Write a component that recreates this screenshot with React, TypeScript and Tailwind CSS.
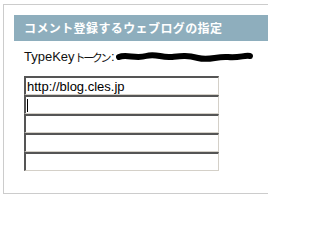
export default function App() {
  const urls = ["http://blog.cles.jp", "", "", "", ""];
  return (
    <div className="w-[268px] h-[201px] overflow-hidden bg-white pt-[4px] pl-[3px]">
      <div className="w-[290px] h-[190px] border-l border-t border-b border-[#cccccc] pt-[10px] pl-[10px]">
        <div
          className="h-[26px] bg-[#8eaebd] pl-[10px] flex items-center text-white font-bold text-[12px] tracking-[0.4px]"
          style={{ fontFamily: '"Noto Sans CJK JP", sans-serif' }}
        >
          コメント登録するウェブログの指定
        </div>
        <div
          className="pl-[10px] mt-[9px] h-[14px] flex items-center text-[13px] text-[#111]"
          style={{ fontFamily: '"Liberation Sans", "Noto Sans CJK JP", sans-serif' }}
        >
          <span>TypeKey</span>
          <span className="text-[11px] tracking-[-2.4px]" style={{ fontFamily: '"Noto Sans CJK JP", sans-serif' }}>
            トークン
          </span>
          <span className="ml-[2px]">:</span>
          <svg width="140" height="10" viewBox="0 0 140 10" className="ml-[1px]">
            <path
              d="M3 5 C10 2 20 7 30 4 S45 6 55 5 S70 3 82 6 S100 4 112 5 S128 3 134 4"
              stroke="#000"
              strokeWidth="6"
              strokeLinecap="round"
              fill="none"
            />
          </svg>
        </div>
        <div className="pl-[10px] mt-[12px] flex flex-col">
          {urls.map((u, i) => (
            <div
              key={i}
              className="w-[195px] h-[19px] box-border border-t-2 border-l-2 border-r border-b border-t-[#555] border-l-[#555] border-r-[#d4d0c8] border-b-[#d4d0c8] bg-white pl-[1px] flex items-center text-[13px] text-black leading-none"
              style={{ fontFamily: '"Liberation Sans", sans-serif' }}
            >
              {u}
              {i === 1 && <span className="w-px h-[13px] bg-black" />}
            </div>
          ))}
        </div>
      </div>
    </div>
  );
}
